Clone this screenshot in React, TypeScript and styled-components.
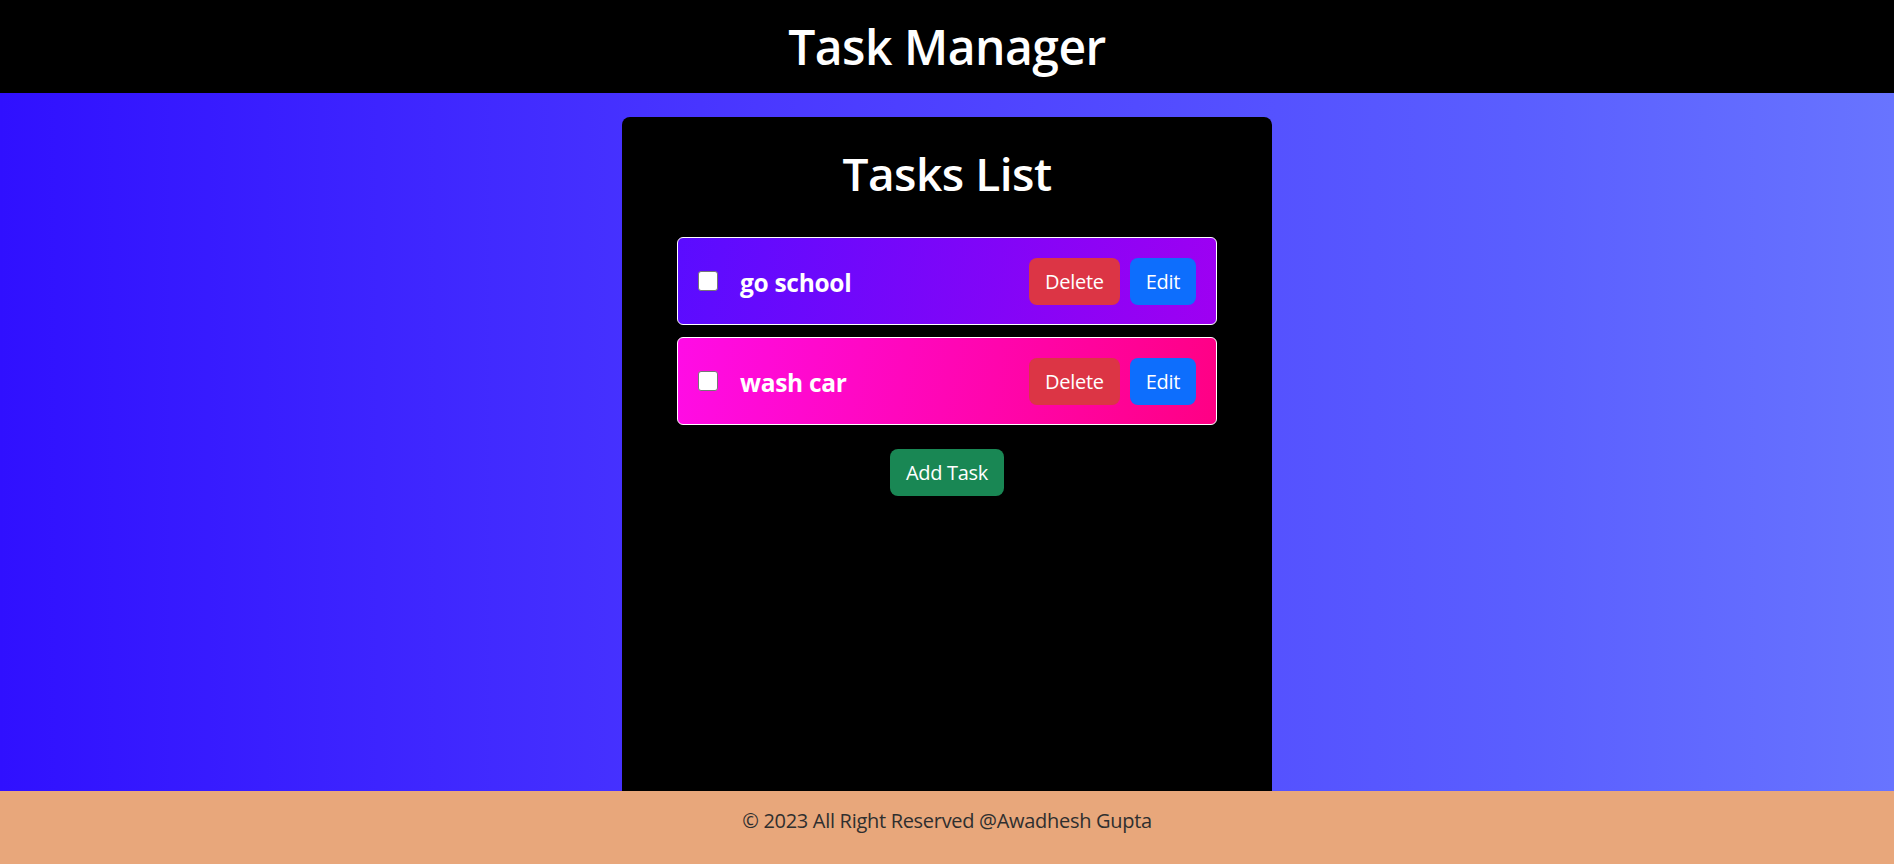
import React from "react";
import styled, { createGlobalStyle } from "styled-components";

const GlobalStyle = createGlobalStyle`
  * { box-sizing: border-box; }
  html, body { margin: 0; padding: 0; }
  body {
    font-family: "Open Sans", "Noto Sans", "Liberation Sans", sans-serif;
    background: #000;
  }
`;

const Page = styled.div`
  height: 100vh;
  display: flex;
  flex-direction: column;
  overflow: hidden;
`;

const Header = styled.header`
  height: 93px;
  flex: none;
  background: #000;
  display: flex;
  align-items: center;
  justify-content: center;
`;

const Title = styled.h1`
  margin: 0;
  color: #fff;
  font-size: 48px;
  font-weight: 600;
  letter-spacing: -0.5px;
  line-height: 1.2;
`;

const Main = styled.main`
  flex: 1;
  min-height: 0;
  overflow: hidden;
  background: linear-gradient(90deg, #3010ff 0%, #4a38ff 40%, #5a5eff 80%, #6874ff 100%);
  display: flex;
  justify-content: center;
  padding-top: 24px;
`;

const Card = styled.section`
  width: 650px;
  min-height: 800px;
  background: #000;
  border-radius: 8px;
  padding: 29px 55px 0 55px;
  display: flex;
  flex-direction: column;
  align-items: stretch;
`;

const CardTitle = styled.h2`
  margin: 0 0 36px 0;
  color: #fff;
  text-align: center;
  font-size: 46px;
  font-weight: 600;
  letter-spacing: -0.5px;
  line-height: 1.2;
`;

const List = styled.div`
  display: flex;
  flex-direction: column;
  gap: 12px;
`;

const Row = styled.div<{ $from: string; $to: string }>`
  height: 88px;
  border: 1px solid #fff;
  border-radius: 6px;
  background: linear-gradient(100deg, ${(p) => p.$from}, ${(p) => p.$to});
  display: flex;
  align-items: center;
  padding: 0 20px 0 20px;
`;

const Check = styled.input`
  appearance: none;
  -webkit-appearance: none;
  width: 20px;
  height: 20px;
  margin: -1px 0 0 0;
  background: #fff;
  border: 1px solid #767676;
  border-radius: 3px;
  flex: none;
`;

const TaskText = styled.span`
  margin: 3px 0 0 22px;
  color: #fff;
  font-size: 24.5px;
  font-weight: 700;
  letter-spacing: -0.3px;
  flex: 1;
`;

const Btn = styled.button<{ $bg: string }>`
  height: 47px;
  padding: 0 16px;
  border: none;
  border-radius: 8px;
  background: ${(p) => p.$bg};
  color: #fff;
  font-family: inherit;
  font-size: 20px;
  letter-spacing: -0.3px;
  line-height: 1;
  cursor: pointer;
`;

const BtnGroup = styled.div`
  display: flex;
  gap: 10px;
  margin-top: 1px;
`;

const AddWrap = styled.div`
  display: flex;
  justify-content: center;
  margin-top: 24px;
`;

const Footer = styled.footer`
  height: 73px;
  flex: none;
  background: #e8a77b;
  display: flex;
  justify-content: center;
  padding-top: 15px;
  color: #2f2f2f;
  font-size: 20px;
  letter-spacing: -0.3px;
  line-height: 30px;
`;

const tasks = [
  { name: "go school", from: "#5a0cff", to: "#9e00f2" },
  { name: "wash car", from: "#ff0ce6", to: "#ff0084" },
];

export default function App() {
  return (
    <>
      <GlobalStyle />
      <Page>
        <Header>
          <Title>Task Manager</Title>
        </Header>
        <Main>
          <Card>
            <CardTitle>Tasks List</CardTitle>
            <List>
              {tasks.map((t) => (
                <Row key={t.name} $from={t.from} $to={t.to}>
                  <Check type="checkbox" />
                  <TaskText>{t.name}</TaskText>
                  <BtnGroup>
                    <Btn $bg="#dc3545">Delete</Btn>
                    <Btn $bg="#0d6efd">Edit</Btn>
                  </BtnGroup>
                </Row>
              ))}
            </List>
            <AddWrap>
              <Btn $bg="#198754">Add Task</Btn>
            </AddWrap>
          </Card>
        </Main>
        <Footer>© 2023 All Right Reserved @Awadhesh Gupta</Footer>
      </Page>
    </>
  );
}
